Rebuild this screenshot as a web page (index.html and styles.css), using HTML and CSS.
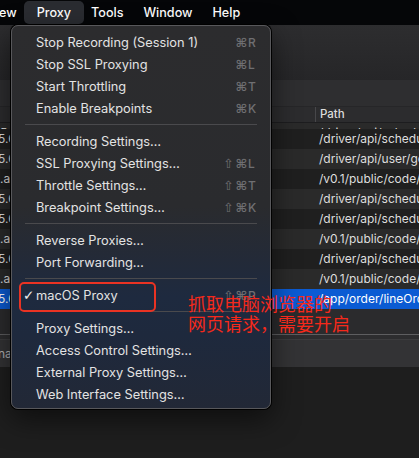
FILE: index.html
```html
<!DOCTYPE html>
<html lang="en">
<head>
<meta charset="utf-8">
<title>Charles Proxy menu</title>
<link rel="stylesheet" href="styles.css">
</head>
<body>
<div class="screen">
  <div class="menubar">
    <span class="mb-item mb-clip">View</span>
    <span class="mb-item mb-active">Proxy</span>
    <span class="mb-item">Tools</span>
    <span class="mb-item">Window</span>
    <span class="mb-item">Help</span>
  </div>

  <div class="app">
    <div class="toolbar"></div>
    <div class="tabbar"></div>
    <div class="thead">
      <div class="th-host"></div>
      <div class="th-path">Path</div>
    </div>
    <div class="tbody">
      <div class="row row-light row-partial"><div class="cell-host">5.6</div><div class="cell-path">/driver/api/schedule/list</div></div>
      <div class="row row-dark"><div class="cell-host host-n">5.6</div><div class="cell-path">/driver/api/schedule/list</div></div>
      <div class="row row-light"><div class="cell-host host-n">5.6</div><div class="cell-path">/driver/api/user/getInfo</div></div>
      <div class="row row-dark"><div class="cell-host host-a">.a</div><div class="cell-path">/v0.1/public/code/check</div></div>
      <div class="row row-light"><div class="cell-host host-n">5.6</div><div class="cell-path">/driver/api/schedule/list</div></div>
      <div class="row row-dark"><div class="cell-host host-n">5.6</div><div class="cell-path">/driver/api/schedule/info</div></div>
      <div class="row row-light"><div class="cell-host host-a">.a</div><div class="cell-path">/v0.1/public/code/check</div></div>
      <div class="row row-dark"><div class="cell-host host-n">5.6</div><div class="cell-path">/driver/api/schedule/list</div></div>
      <div class="row row-light"><div class="cell-host host-a">.a</div><div class="cell-path">/v0.1/public/code/check</div></div>
      <div class="row row-sel"><div class="cell-host host-n">5.6</div><div class="cell-path">/app/order/lineOrder/list</div></div>
    </div>
    <div class="empty"></div>
    <div class="splitter"></div>
    <div class="statusbar"><span class="status-text">na</span></div>
    <div class="lower"></div>
  </div>

  <div class="menu">
    <div class="mi"><span class="check"></span><span class="label">Stop Recording (Session 1)</span><span class="kbd"><span class="mod">⌘</span><span class="key">R</span></span></div>
    <div class="mi"><span class="check"></span><span class="label">Stop SSL Proxying</span><span class="kbd"><span class="mod">⌘</span><span class="key">L</span></span></div>
    <div class="mi"><span class="check"></span><span class="label">Start Throttling</span><span class="kbd"><span class="mod">⌘</span><span class="key">T</span></span></div>
    <div class="mi"><span class="check"></span><span class="label">Enable Breakpoints</span><span class="kbd"><span class="mod">⌘</span><span class="key">K</span></span></div>
    <div class="sep"></div>
    <div class="mi"><span class="check"></span><span class="label">Recording Settings…</span></div>
    <div class="mi"><span class="check"></span><span class="label">SSL Proxying Settings…</span><span class="kbd"><span class="mod shift">⇧</span><span class="mod">⌘</span><span class="key">L</span></span></div>
    <div class="mi"><span class="check"></span><span class="label">Throttle Settings…</span><span class="kbd"><span class="mod shift">⇧</span><span class="mod">⌘</span><span class="key">T</span></span></div>
    <div class="mi"><span class="check"></span><span class="label">Breakpoint Settings…</span><span class="kbd"><span class="mod shift">⇧</span><span class="mod">⌘</span><span class="key">K</span></span></div>
    <div class="sep"></div>
    <div class="mi"><span class="check"></span><span class="label">Reverse Proxies…</span></div>
    <div class="mi"><span class="check"></span><span class="label">Port Forwarding…</span></div>
    <div class="sep"></div>
    <div class="mi"><span class="check">✓</span><span class="label">macOS Proxy</span><span class="kbd kbd-under"><span class="mod shift">⇧</span><span class="mod">⌘</span><span class="key">P</span></span></div>
    <div class="sep"></div>
    <div class="mi"><span class="check"></span><span class="label">Proxy Settings…</span></div>
    <div class="mi"><span class="check"></span><span class="label">Access Control Settings…</span></div>
    <div class="mi"><span class="check"></span><span class="label">External Proxy Settings…</span></div>
    <div class="mi"><span class="check"></span><span class="label">Web Interface Settings…</span></div>
  </div>

  <div class="callout-box"></div>
  <div class="callout-text">抓取电脑浏览器的<br>网页请求，需要开启</div>
</div>
</body>
</html>
```

FILE: styles.css
```css
html, body {
  margin: 0;
  padding: 0;
  background: #1e1e1e;
}

body {
  font-family: Inter, "Noto Sans", "Liberation Sans", sans-serif;
}

.screen {
  position: relative;
  width: 419px;
  height: 458px;
  overflow: hidden;
  background: #1e1e1e;
}

/* ---------- macOS menu bar ---------- */
.menubar {
  height: 25px;
  background: #050608;
  display: flex;
  align-items: center;
  gap: 20px;
  color: #ffffff;
  font-size: 12.6px;
  font-weight: 500;
  white-space: nowrap;
}

.mb-item {
  line-height: 23px;
}

.mb-clip {
  margin-left: -13px;
}

.mb-active {
  background: #2a2c31;
  border-radius: 5px;
  padding: 0 13px;
  margin: 0 -13px;
}

/* ---------- background application ---------- */
.app {
  display: flex;
  flex-direction: column;
  height: 433px;
}

.toolbar {
  height: 55px;
  background: linear-gradient(#2d2d2f, #262628);
}

.tabbar {
  height: 26px;
  background: #2e2e30;
}

.thead {
  height: 17px;
  box-sizing: border-box;
  display: grid;
  grid-template-columns: 315px 1fr;
  background: #2c2c2e;
  border-top: 1px solid #262628;
  border-bottom: 1px solid #1d1d1f;
}

.th-path {
  border-left: 1px solid #47474a;
  padding-left: 4px;
  font-size: 11.5px;
  line-height: 15px;
  color: #dcdcdc;
  font-weight: 500;
}

.row {
  display: grid;
  grid-template-columns: 315px 1fr;
  height: 20px;
  line-height: 20px;
  font-size: 12px;
  color: #dedede;
  white-space: nowrap;
  overflow: hidden;
}

.row-dark { background: #1f1f1f; }
.row-light { background: #2a2a2a; }
.row-sel { background: #0b5bd3; color: #ffffff; }

.row-partial {
  height: 6px;
  align-items: end;
}

.row-partial > div {
  height: 20px;
}

.cell-host {
  overflow: hidden;
}

.host-n { margin-left: -2px; }
.host-a { margin-left: 0; }

.cell-path {
  padding-left: 4px;
  overflow: hidden;
}

.empty {
  height: 25px;
  background: #2b2b2d;
}

.splitter {
  height: 6px;
  box-sizing: border-box;
  border-top: 1px solid #5e5e60;
  border-bottom: 1px solid #3c3c3e;
  background: #2d2d2f;
}

.statusbar {
  height: 27px;
  background: #333335;
  font-size: 12px;
  color: #b5b5b5;
  line-height: 27px;
  white-space: nowrap;
  overflow: hidden;
}

.status-text {
  margin-left: -2px;
}

.lower {
  flex: 1;
  background: #1e1e1e;
}

/* ---------- dropdown menu ---------- */
.menu {
  position: absolute;
  left: 11px;
  top: 25px;
  width: 260px;
  box-sizing: border-box;
  padding: 5px 0 3px;
  border: 1px solid #58585b;
  border-radius: 7px;
  background: linear-gradient(to bottom,
    #2c2c2e 0px,
    #2a2b2e 180px,
    #232a38 235px,
    #1e2a3f 270px,
    #1e293d 310px,
    #222836 383px);
  box-shadow: 0 0 0 1px #000000, 0 10px 28px rgba(0, 0, 0, 0.55);
  color: #e3e3e3;
  font-size: 12.8px;
}

.mi {
  display: flex;
  align-items: center;
  height: 22px;
  padding: 0 13px 0 10px;
  white-space: nowrap;
}

.check {
  width: 14px;
  flex: none;
  font-family: "DejaVu Sans", sans-serif;
  font-size: 13.5px;
  color: #ececec;
  margin-left: 1px;
  margin-right: -1px;
}

.label {
  flex: 1;
}

.kbd {
  display: flex;
  align-items: center;
  color: #6f6f72;
  font-size: 12px;
  font-weight: 500;
}

.mod {
  font-family: "DejaVu Sans", sans-serif;
  font-size: 12.5px;
  font-weight: 700;
  margin-right: 1px;
}

.mod.shift {
  font-weight: 400;
  margin-right: 2px;
}

.key {
  width: 9px;
}

.sep {
  height: 1px;
  margin: 5px 13px;
  background: #4a4a4d;
}

/* ---------- annotation ---------- */
.callout-box {
  position: absolute;
  left: 19px;
  top: 282px;
  width: 137px;
  height: 30px;
  box-sizing: border-box;
  border: 2px solid #ea3323;
  border-radius: 5px;
}

.callout-text {
  position: absolute;
  left: 188px;
  top: 294px;
  font-family: "Noto Sans CJK SC", sans-serif;
  font-size: 18px;
  line-height: 19.5px;
  color: #f5291b;
  white-space: nowrap;
}
```
